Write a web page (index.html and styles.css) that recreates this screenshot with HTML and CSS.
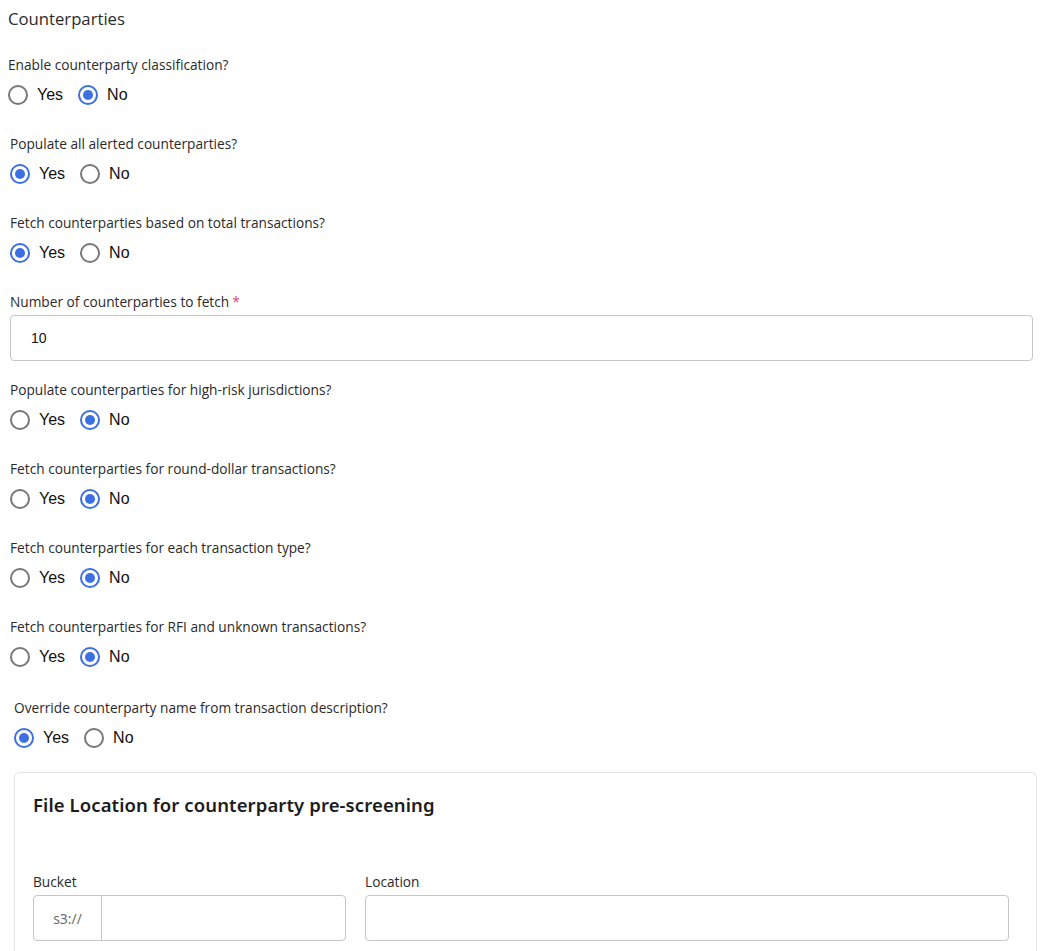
FILE: index.html
```html
<!DOCTYPE html>
<html lang="en">
<head>
    <meta charset="UTF-8">
    <title>Counterparties</title>
    <meta name="viewport" content="width=device-width, initial-scale=1.0">
    <link rel="stylesheet" href="styles.css">
</head>
<body>
    <main class="settings">
        <h2 class="section-title">Counterparties</h2>

        <div class="field">
            <p class="field-label">Enable counterparty classification?</p>
            <div class="radio-row">
                <label class="radio"><span class="dot"></span>Yes</label>
                <label class="radio"><span class="dot on"></span>No</label>
            </div>
        </div>

        <div class="field indent">
            <p class="field-label">Populate all alerted counterparties?</p>
            <div class="radio-row">
                <label class="radio"><span class="dot on"></span>Yes</label>
                <label class="radio"><span class="dot"></span>No</label>
            </div>
        </div>

        <div class="field indent">
            <p class="field-label">Fetch counterparties based on total transactions?</p>
            <div class="radio-row">
                <label class="radio"><span class="dot on"></span>Yes</label>
                <label class="radio"><span class="dot"></span>No</label>
            </div>
        </div>

        <div class="field indent">
            <p class="field-label">Number of counterparties to fetch<span class="req">*</span></p>
            <div class="text-input wide">10</div>
        </div>

        <div class="field indent">
            <p class="field-label">Populate counterparties for high-risk jurisdictions?</p>
            <div class="radio-row">
                <label class="radio"><span class="dot"></span>Yes</label>
                <label class="radio"><span class="dot on"></span>No</label>
            </div>
        </div>

        <div class="field indent">
            <p class="field-label">Fetch counterparties for round-dollar transactions?</p>
            <div class="radio-row">
                <label class="radio"><span class="dot"></span>Yes</label>
                <label class="radio"><span class="dot on"></span>No</label>
            </div>
        </div>

        <div class="field indent">
            <p class="field-label">Fetch counterparties for each transaction type?</p>
            <div class="radio-row">
                <label class="radio"><span class="dot"></span>Yes</label>
                <label class="radio"><span class="dot on"></span>No</label>
            </div>
        </div>

        <div class="field indent">
            <p class="field-label">Fetch counterparties for RFI and unknown transactions?</p>
            <div class="radio-row">
                <label class="radio"><span class="dot"></span>Yes</label>
                <label class="radio"><span class="dot on"></span>No</label>
            </div>
        </div>

        <div class="field indent-more">
            <p class="field-label">Override counterparty name from transaction description?</p>
            <div class="radio-row">
                <label class="radio"><span class="dot on"></span>Yes</label>
                <label class="radio"><span class="dot"></span>No</label>
            </div>
        </div>

        <section class="card">
            <h3 class="card-title">File Location for counterparty pre-screening</h3>
            <div class="card-grid">
                <div>
                    <p class="field-label">Bucket</p>
                    <div class="input-group">
                        <span class="prefix">s3://</span>
                        <span class="grow"></span>
                    </div>
                </div>
                <div>
                    <p class="field-label">Location</p>
                    <div class="text-input"></div>
                </div>
            </div>
        </section>
    </main>
</body>
</html>
```

FILE: styles.css
```css
body {
    margin: 0;
    background: #fff;
    color: #222;
    font-family: "Open Sans", "Noto Sans", sans-serif;
}
.settings {
    padding: 7px 4px 0 8px;
}
.section-title {
    margin: 0 0 23px;
    font-size: 16.7px;
    font-weight: 400;
    line-height: 24px;
    color: #2b2b2b;
}
.field {
    margin-bottom: 26px;
}
.indent {
    margin-left: 2px;
}
/* last question sits a little further in and lower */
.indent-more {
    margin-left: 6px;
    padding-top: 2px;
    margin-bottom: 22px;
}
.field-label {
    margin: 0;
    padding-top: 1px;
    font-size: 13.7px;
    line-height: 20px;
    color: #2a2a2a;
}
.req {
    color: #e0457b;
    margin-left: 3px;
}
.radio-row {
    display: flex;
    gap: 15px;
    margin-top: 8px;
    height: 24px;
    align-items: center;
}
.radio {
    display: flex;
    align-items: center;
    gap: 9px;
    font-family: "Liberation Sans", Arial, sans-serif;
    font-size: 16px;
    color: #111;
}
.dot {
    box-sizing: border-box;
    width: 20px;
    height: 20px;
    border: 2px solid #777;
    border-radius: 50%;
    display: flex;
    align-items: center;
    justify-content: center;
}
.dot.on {
    border-color: #3c6fe4;
}
.dot.on::after {
    content: "";
    width: 10px;
    height: 10px;
    border-radius: 50%;
    background: #3c6fe4;
}
.text-input {
    box-sizing: border-box;
    height: 46px;
    margin-top: 3px;
    border: 1px solid #c6c6c6;
    border-radius: 4px;
    padding: 0 20px;
    display: flex;
    align-items: center;
    font-family: "Liberation Sans", Arial, sans-serif;
    font-size: 14px;
    color: #111;
}
.text-input.wide {
    margin-right: 4px;
    margin-bottom: -8px;
}
.card {
    margin-left: 6px;
    border: 1px solid #e4e4e4;
    border-bottom: none;
    border-radius: 6px 6px 0 0;
    padding: 20px 27px 40px 18px;
}
.card-title {
    margin: 0;
    font-family: "Noto Sans", Inter, sans-serif;
    font-size: 18.5px;
    font-weight: 600;
    letter-spacing: 0.1px;
    line-height: 24px;
    color: #1c1c1c;
}
.card-grid {
    display: grid;
    grid-template-columns: 313px 1fr;
    gap: 19px;
    margin-top: 54px;
}
.input-group {
    box-sizing: border-box;
    display: flex;
    height: 46px;
    margin-top: 3px;
    border: 1px solid #c6c6c6;
    border-radius: 4px;
}
.prefix {
    width: 67px;
    border-right: 1px solid #c6c6c6;
    display: flex;
    align-items: center;
    justify-content: center;
    font-size: 14px;
    color: #666;
}
.grow {
    flex: 1;
}
```
